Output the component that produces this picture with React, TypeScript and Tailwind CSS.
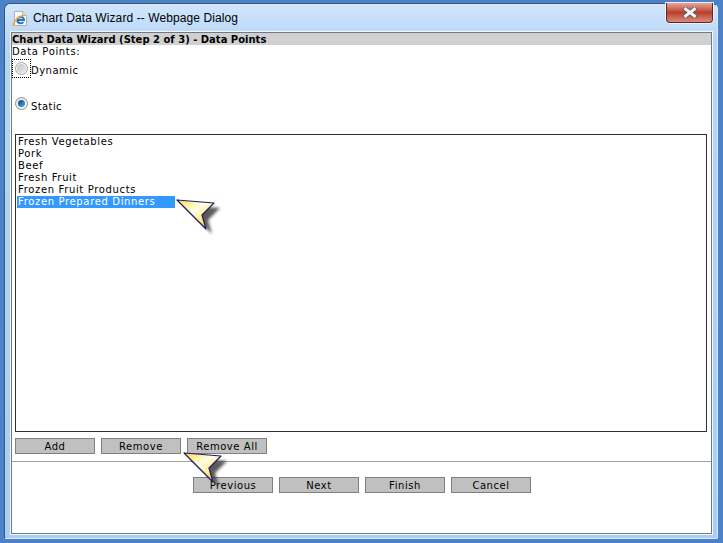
function Pointer({ id, className }: { id: string; className: string }) {
  return (
    <svg className={className} width="52" height="46" viewBox="0 0 52 46">
      <defs>
        <linearGradient id={id} x1="0" y1="0" x2="1" y2="1">
          <stop offset="0" stopColor="#ffe040" />
          <stop offset="0.42" stopColor="#fffde8" />
          <stop offset="0.68" stopColor="#ffec80" />
          <stop offset="1" stopColor="#e0a020" />
        </linearGradient>
        <filter id={`${id}Blur`} x="-30%" y="-30%" width="160%" height="160%">
          <feGaussianBlur stdDeviation="1.8" />
        </filter>
      </defs>
      <path d="M7 6 L44 9 L32 21 L36 35 Z" fill="#333" opacity="0.8" filter={`url(#${id}Blur)`} />
      <path d="M1 1 L38 4 L26 16 L30 30 Z" fill={`url(#${id})`} stroke="#1c1c6c" strokeWidth="1.2" strokeLinejoin="round" />
    </svg>
  );
}

function Button({ label }: { label: string }) {
  return (
    <button
      type="button"
      className="h-4 w-20 border border-[#808080] bg-[#c0c0c0] pt-px text-center text-[10px] leading-[14px] tracking-[0.55px] text-black"
    >
      {label}
    </button>
  );
}

function Radio({ checked }: { checked?: boolean }) {
  return (
    <span
      className={
        checked
          ? "mt-[2px] flex h-[13px] w-[13px] shrink-0 items-center justify-center rounded-full border border-[#8e8f8f] bg-gradient-to-br from-[#e2e2e2] to-[#fbfbfb]"
          : "flex h-[13px] w-[13px] shrink-0 items-center justify-center rounded-full border border-[#a4a4a4] bg-[#f4f4f4]"
      }
    >
      <span
        className={
          checked
            ? "h-[7px] w-[7px] rounded-full bg-gradient-to-br from-[#0f3f73] to-[#4fb0e8]"
            : "h-[9px] w-[9px] rounded-full bg-gradient-to-br from-[#c6c6c6] to-[#e8e8e8]"
        }
      />
    </span>
  );
}

export default function App() {
  const items = ["Fresh Vegetables", "Pork", "Beef", "Fresh Fruit", "Frozen Fruit Products"];

  return (
    <div className="h-[543px] w-[723px] overflow-hidden bg-[#4c82c8] pl-1 pr-[5px] pt-[3px] pb-[4px] font-['DejaVu_Sans',sans-serif]">
      <div className="flex h-full flex-col rounded-t-[6px] rounded-b-[2px] border border-[#3f5672] border-r-[#dcebfb] border-b-[#dcebfb] bg-gradient-to-b from-[#d2e6fc] via-[#b6d6f7] via-[7%] to-[#a9cdf4] pl-[6px] pr-[5px] pb-[4px]">
        <div className="flex h-[28px] shrink-0 items-center">
          <svg className="ml-px mt-[1px]" width="16" height="17" viewBox="0 0 16 17">
            <path d="M2.5 1.5 H10.5 L14.5 5.5 V15.5 H2.5 Z" fill="#fbfbfb" stroke="#b0b0b0" />
            <path d="M10.5 1.5 V5.5 H14.5" fill="#e4e4e4" stroke="#b0b0b0" />
            <path d="M5 10 H12 C12 6.5 6.5 6 5.5 9.5 C4.5 13 9.5 14.5 11.5 12" fill="none" stroke="#2a72c8" strokeWidth="2" />
            <path d="M1 15.5 C3 9 8 5 12.5 5.5" fill="none" stroke="#e8a820" strokeWidth="1.6" />
          </svg>
          <span className="ml-[5px] font-['Liberation_Sans',sans-serif] text-[12px] leading-none tracking-[0.09px] text-black">
            Chart Data Wizard -- Webpage Dialog
          </span>
          <div className="-mr-px -mt-px ml-auto flex h-5 w-[47px] items-center justify-center self-start rounded-b-[4px] border border-t-0 border-[#5c2a22] bg-gradient-to-b from-[#e8a599] via-[#b93f2c] to-[#d98b7c] shadow-[0_0_0_1px_#e8f2fd]">
            <svg width="16" height="11" viewBox="0 0 16 11">
              <path d="M3.5 2 L12.5 9 M12.5 2 L3.5 9" stroke="#4a5664" strokeWidth="4.5" strokeLinecap="square" />
              <path d="M3.5 2 L12.5 9 M12.5 2 L3.5 9" stroke="#f4f4f6" strokeWidth="3" strokeLinecap="square" />
            </svg>
          </div>
        </div>

        <div className="relative flex min-h-0 flex-1 flex-col border border-[#6d7a88] bg-white text-[10px] text-black shadow-[0_0_0_1px_#f2f8ff]">
          <div className="h-3 shrink-0 bg-[#d0d0d0] text-[10px] font-bold leading-[14px]">
            Chart Data Wizard (Step 2 of 3) - Data Points
          </div>
          <div className="mt-[1px] h-3 leading-3 tracking-[0.65px]">Data Points:</div>
          <div className="mt-[1px] flex h-[19px] items-start">
            <span className="flex h-[19px] w-[19px] items-center justify-center border border-dotted border-black pb-px pr-px">
              <Radio />
            </span>
            <span className="mt-[6px] leading-3 tracking-[0.5px]">Dynamic</span>
          </div>
          <div className="mt-[17px] flex h-4 items-start pl-[3px]">
            <Radio checked />
            <span className="ml-[3px] mt-[6px] leading-3 tracking-[0.4px]">Static</span>
          </div>

          <div className="ml-[3px] mr-1 mt-[23px] h-[298px] border border-[#303030] px-[1px] pt-[1px]">
            {items.map((item) => (
              <div key={item} className="h-3 pl-[1px] leading-3 tracking-[0.65px]">
                {item}
              </div>
            ))}
            <div className="h-3 w-[158px] bg-[#3399ff] pl-[1px] leading-3 tracking-[0.65px] text-white">
              Frozen Prepared Dinners
            </div>
          </div>

          <div className="mx-[3px] mt-[6px] flex gap-[6px]">
            <Button label="Add" />
            <Button label="Remove" />
            <Button label="Remove All" />
          </div>
          <div className="mt-[7px] h-px bg-[#a0a0a0]" />
          <div className="ml-[181px] mt-[15px] flex gap-[6px]">
            <Button label="Previous" />
            <Button label="Next" />
            <Button label="Finish" />
            <Button label="Cancel" />
          </div>

          <Pointer id="pointerTop" className="absolute left-[164px] top-[166px]" />
          <Pointer id="pointerBottom" className="absolute left-[171px] top-[419px]" />
        </div>
      </div>
    </div>
  );
}
